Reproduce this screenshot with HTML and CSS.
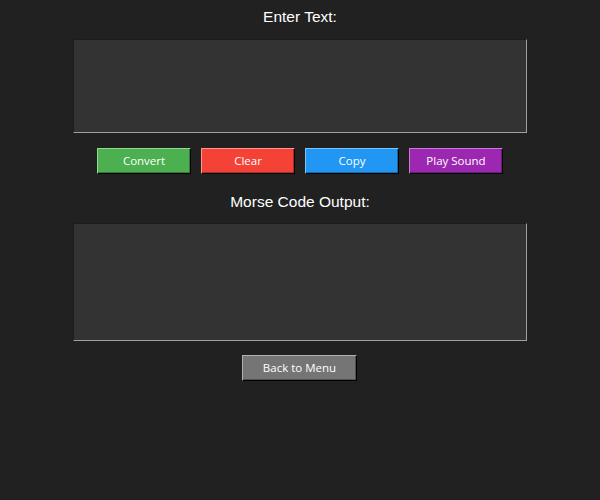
FILE: index.html
```html
<!DOCTYPE html>
<html>
<head>
<meta charset="utf-8">
<link rel="stylesheet" href="styles.css">
</head>
<body>
<div class="app">
  <div class="label label-input">Enter Text:</div>
  <textarea class="box box-input"></textarea>
  <div class="actions">
    <button class="btn btn-green">Convert</button>
    <button class="btn btn-red">Clear</button>
    <button class="btn btn-blue">Copy</button>
    <button class="btn btn-purple">Play Sound</button>
  </div>
  <div class="label label-output">Morse Code Output:</div>
  <textarea class="box box-output"></textarea>
  <button class="btn btn-gray btn-back">Back to Menu</button>
</div>
</body>
</html>
```
FILE: styles.css
```css
html, body {
  margin: 0;
  padding: 0;
  background: #212121;
  width: 600px;
  height: 500px;
  overflow: hidden;
}
.app {
  display: flex;
  flex-direction: column;
  align-items: center;
}
.label {
  font-family: "Liberation Sans", Arial, sans-serif;
  font-size: 15.5px;
  line-height: 18px;
  color: #ffffff;
}
.label-input { margin-top: 8px; }
.label-output { margin-top: 19px; }
.box {
  box-sizing: border-box;
  width: 454px;
  margin: 13px 0 0 0;
  padding: 0;
  background: #333333;
  border: 1px solid;
  border-color: #1c1c1c #a0a0a0 #a0a0a0 #1c1c1c;
  resize: none;
  outline: none;
  display: block;
  color: #fff;
}
.box-input { height: 94px; }
.box-output { height: 118px; margin-top: 12px; }
.actions {
  display: flex;
  gap: 10px;
  margin-top: 15px;
}
.btn {
  box-sizing: border-box;
  width: 94px;
  height: 26px;
  padding: 0 0 1px 0;
  margin: 0;
  font-family: "Open Sans", "Noto Sans", sans-serif;
  font-size: 11.5px;
  color: #ffffff;
  border: 1px solid;
  border-color: var(--light) #000 #000 var(--light);
  box-shadow: inset -1px -1px 0 var(--dark);
  background: var(--bg);
  display: flex;
  align-items: center;
  justify-content: center;
}
.btn-green { --bg: #4caf50; --light: #8fd992; --dark: #357a38; }
.btn-red { --bg: #f44336; --light: #f99a92; --dark: #aa2e25; }
.btn-blue { --bg: #2196f3; --light: #7ec3f9; --dark: #1769aa; }
.btn-purple { --bg: #9c27b0; --light: #c97ad6; --dark: #6d1b7b; }
.btn-gray { --bg: #757575; --light: #b0b0b0; --dark: #515151; }
.btn-back {
  width: 115px;
  margin-top: 14px;
  margin-right: 1px;
}
```
